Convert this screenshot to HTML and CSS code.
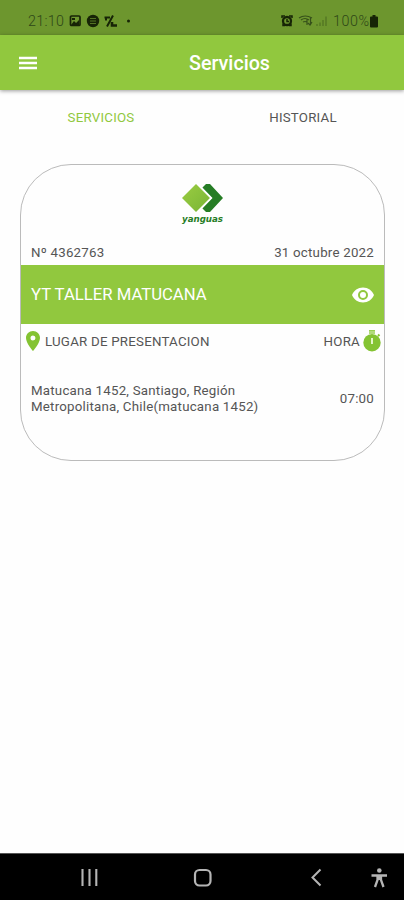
FILE: index.html
```
<!DOCTYPE html>
<html lang="es">
<head>
<meta charset="utf-8">
<title>Servicios</title>
<link rel="stylesheet" href="styles.css">
</head>
<body>
<div class="status">
  <span class="clock">21:10</span>
  <svg class="left-icons" width="64" height="14" viewBox="0 0 64 14">
    <rect x="1.500" y="2" width="9.500" height="9.500" rx="1" fill="none" stroke="#172406" stroke-width="1.700"/>
    <path d="M2 11l3-4 2 2 3-3v5zM3 4h3v2H3z" fill="#172406"/>
    <circle cx="24" cy="7" r="6.200" fill="#172406"/>
    <path d="M21 4.500h6M21 7h6M21 9.500h6" stroke="#5a7d27" stroke-width=".9"/>
    <path d="M35.500 3.500h5.500M44 1.500L38 12.500M37 3.500v3" fill="none" stroke="#172406" stroke-width="2"/>
    <path d="M43 8v3.500h5" fill="none" stroke="#172406" stroke-width="2.600"/>
    <circle cx="59.500" cy="7" r="1.500" fill="#172406"/>
  </svg>
  <svg class="right-icons" width="50" height="14" viewBox="0 0 50 14">
    <circle cx="6" cy="7" r="4" fill="none" stroke="#172406" stroke-width="2.300"/>
    <path d="M1 4V2h3M8 2h3v2M2 9.500v2h2M10 9.500v2H8M6 5v2.500h2" fill="none" stroke="#172406" stroke-width="1.500"/>
    <path d="M18 4q6-4 13 0M20 6q4-3 8 0M22 8q2-1 4 0M26 5v6M29.500 4v7M27 9l2 2 2-3" fill="none" stroke="#36501a" stroke-width="1.200"/>
    <path d="M36 12v-2M39 12V8.500M42 12V6M45 12V2.500" stroke="#527423" stroke-width="1.300"/>
  </svg>
  <span class="percent">100%</span>
  <svg class="battery" width="8" height="13" viewBox="0 0 8 13"><path d="M2.500 0h3v1.500H7q1 0 1 1V11.500q0 1-1 1H1q-1 0-1-1V2.500q0-1 1-1h1.500z" fill="#172406"/></svg>
</div>
<header class="appbar">
  <svg class="menu" width="18" height="14" viewBox="0 0 18 14"><path d="M0 2h18M0 7h18M0 12h18" stroke="#fff" stroke-width="2.300"/></svg>
  <h1>Servicios</h1>
</header>
<nav class="tabs">
  <span class="tab active">SERVICIOS</span>
  <span class="tab">HISTORIAL</span>
</nav>
<main>
  <article class="card">
    <div class="brand">
      <svg width="46" height="42" viewBox="0 0 46 42">
        <defs><linearGradient id="leaf" x2="1" y2="1"><stop stop-color="#9bcd42"/><stop offset="1" stop-color="#78b435"/></linearGradient></defs>
        <path d="M23 5l4-4h4L44 15 31 29h-4l-4-4L33 15z" fill="#267d25"/>
        <path d="M17 1l14 14L17 29 3 15z" fill="url(#leaf)"/>
        <path d="M18.500 .5L32.500 15 18.500 29.500" fill="none" stroke="#fff" stroke-width="1.500"/>
        <text x="3" y="38.500" textLength="41" lengthAdjust="spacingAndGlyphs" class="wordmark">yanguas</text>
      </svg>
    </div>
    <div class="meta"><span class="number">Nº 4362763</span><span class="date">31 octubre 2022</span></div>
    <div class="banner">
      <span class="service">YT TALLER MATUCANA</span>
      <svg width="22" height="16" viewBox="1 4 22 16"><path d="M12 4.500C7 4.500 2.730 7.610 1 12c1.730 4.390 6 7.500 11 7.500s9.270-3.110 11-7.500c-1.730-4.390-6-7.500-11-7.500zM12 17a5 5 0 1 1 0-10 5 5 0 0 1 0 10zm0-8a3 3 0 1 0 0 6 3 3 0 0 0 0-6z" fill="#fff"/></svg>
    </div>
    <div class="labels">
      <svg class="pin" width="14" height="20" viewBox="5 2 14 20"><path d="M12 2C8.130 2 5 5.130 5 9c0 5.250 7 13 7 13s7-7.750 7-13c0-3.870-3.130-7-7-7zm0 9.500a2.500 2.500 0 1 1 0-5 2.500 2.500 0 0 1 0 5z" fill="#84c332"/></svg>
      <span class="place">LUGAR DE PRESENTACION</span>
      <span class="hour">HORA</span>
      <svg class="timer" width="18" height="22" viewBox="0 0 18 22"><circle cx="9" cy="12.700" r="8.700" fill="#84c332"/><path d="M6 .8h6M6 3h6" stroke="#98ce50" stroke-width="1.700"/><path d="M15 4.500l1.500 1.500" stroke="#84c332" stroke-width="2"/><path d="M9 8v6" stroke="#e4f5c8" stroke-width="2"/></svg>
    </div>
    <div class="details">
      <p>Matucana 1452, Santiago, Región<br>Metropolitana, Chile(matucana 1452)</p>
      <span class="time">07:00</span>
    </div>
  </article>
</main>
<footer class="sysnav">
  <svg width="404" height="46" viewBox="0 0 404 46">
    <g fill="none" stroke="#b5b5b5">
      <path d="M82.500 15v17M89.500 15v17M96.300 15v17" stroke-width="2.100"/>
      <rect x="195" y="16" width="15.500" height="15.500" rx="4.500" stroke-width="2.200"/>
      <path d="M320.500 15.500L312.500 23.500 320.500 31.500" stroke-width="2"/>
      <path d="M371.500 21.500h15.500M379.300 21v5M377.500 22v4L375 33M381 22v4l2.500 7" stroke-width="2.300"/>
    </g>
    <circle cx="379.300" cy="16.500" r="2.300" fill="#b5b5b5"/>
  </svg>
</footer>
</body>
</html>
```
FILE: styles.css
```
* { box-sizing: border-box; }
body {
  margin: 0;
  width: 404px;
  height: 900px;
  display: flex;
  flex-direction: column;
  overflow: hidden;
  background: #fefefe;
  color: #555;
  font: 13.3px/16px Roboto, "Liberation Sans", sans-serif;
  letter-spacing: .22px;
}
svg { display: block; flex: none; }
.status {
  height: 35px;
  flex: none;
  display: flex;
  align-items: center;
  padding: 7px 26px 0 28px;
  background: #6d962e;
  color: #2e4717;
  font-size: 14.3px;
  font-weight: 300;
}
.clock { width: 41px; letter-spacing: .3px; }
.right-icons { margin-left: auto; }
.percent { width: 37px; margin-left: 2px; letter-spacing: .6px; }
.appbar {
  height: 55px;
  flex: none;
  display: flex;
  align-items: center;
  padding: 0 19px;
  background: #91c83e;
  box-shadow: 0 1px 4px rgba(0, 0, 0, .4);
  color: #fff;
}
.appbar h1 {
  flex: 1;
  margin: 2px 0 0;
  padding-left: 37px;
  text-align: center;
  font-size: 19.7px;
  font-weight: 500;
  letter-spacing: 0;
  line-height: 24px;
}
.tabs { display: flex; height: 74px; flex: none; padding-top: 20px; }
.tab { flex: 1; text-align: center; }
.tab.active { color: #91c83e; }
main { flex: 1; padding: 0 19px 0 20px; }
.card {
  height: 297px;
  border: 1px solid #bbb;
  border-radius: 51px;
}
.brand { height: 80px; display: flex; justify-content: center; padding: 18px 1px 0 0; }
.wordmark { font: italic 700 8.5px "DejaVu Sans", sans-serif; letter-spacing: 0; fill: #267d25; }
.meta { display: flex; justify-content: space-between; height: 20px; padding: 0 10px; }
.banner {
  height: 59px;
  display: flex;
  align-items: center;
  justify-content: space-between;
  padding: 0 10px;
  background: #91c83e;
  color: #fff;
  font-size: 16.7px;
  letter-spacing: 0;
}
.service { padding-top: 1px; }
.labels { height: 34px; display: flex; align-items: center; padding: 0 3px 0 5px; }
.place { margin-left: 5px; padding-top: 2px; }
.hour { margin: 0 3px 0 auto; padding-top: 2px; }
.details { height: 80px; display: flex; justify-content: space-between; align-items: center; padding: 2px 10px 0; }
.details p { margin: 0; }
.sysnav { height: 47px; flex: none; background: #000; border-top: 1px solid #555; }
```
